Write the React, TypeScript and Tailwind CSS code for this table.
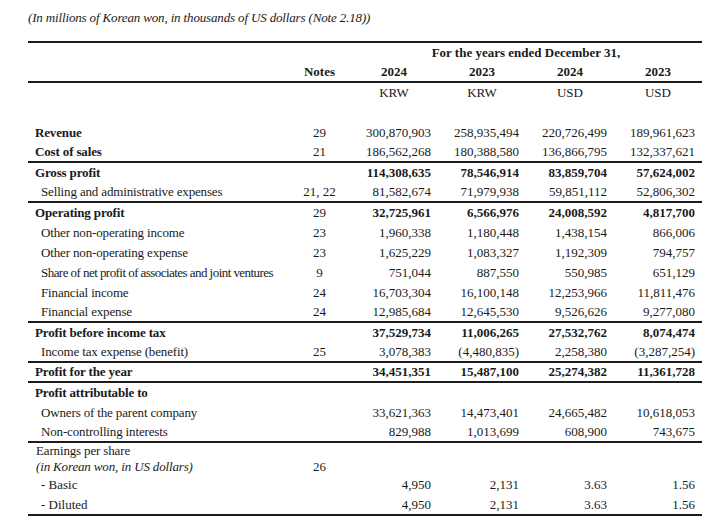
import React from "react";

type Row = {
  label: string;
  note?: string;
  vals?: string[];
  boldLabel?: boolean;
  boldVals?: boolean;
  indent?: boolean;
  border?: boolean;
  tight?: boolean;
};

const rows: Row[] = [
  { label: "Revenue", note: "29", vals: ["300,870,903", "258,935,494", "220,726,499", "189,961,623"], boldLabel: true },
  { label: "Cost of sales", note: "21", vals: ["186,562,268", "180,388,580", "136,866,795", "132,337,621"], boldLabel: true, border: true },
  { label: "Gross profit", vals: ["114,308,635", "78,546,914", "83,859,704", "57,624,002"], boldLabel: true, boldVals: true },
  { label: "Selling and administrative expenses", note: "21, 22", vals: ["81,582,674", "71,979,938", "59,851,112", "52,806,302"], indent: true, border: true },
  { label: "Operating profit", note: "29", vals: ["32,725,961", "6,566,976", "24,008,592", "4,817,700"], boldLabel: true, boldVals: true },
  { label: "Other non-operating income", note: "23", vals: ["1,960,338", "1,180,448", "1,438,154", "866,006"], indent: true },
  { label: "Other non-operating expense", note: "23", vals: ["1,625,229", "1,083,327", "1,192,309", "794,757"], indent: true },
  { label: "Share of net profit of associates and joint ventures", note: "9", vals: ["751,044", "887,550", "550,985", "651,129"], indent: true, tight: true },
  { label: "Financial income", note: "24", vals: ["16,703,304", "16,100,148", "12,253,966", "11,811,476"], indent: true },
  { label: "Financial expense", note: "24", vals: ["12,985,684", "12,645,530", "9,526,626", "9,277,080"], indent: true, border: true },
  { label: "Profit before income tax", vals: ["37,529,734", "11,006,265", "27,532,762", "8,074,474"], boldLabel: true, boldVals: true },
  { label: "Income tax expense (benefit)", note: "25", vals: ["3,078,383", "(4,480,835)", "2,258,380", "(3,287,254)"], indent: true, border: true },
  { label: "Profit for the year", vals: ["34,451,351", "15,487,100", "25,274,382", "11,361,728"], boldLabel: true, boldVals: true, border: true },
  { label: "Profit attributable to", boldLabel: true },
  { label: "Owners of the parent company", vals: ["33,621,363", "14,473,401", "24,665,482", "10,618,053"], indent: true },
  { label: "Non-controlling interests", vals: ["829,988", "1,013,699", "608,900", "743,675"], indent: true, border: true },
];

function Cols({ vals, bold }: { vals: string[]; bold?: boolean }) {
  return (
    <>
      {vals.map((v, i) => (
        <div key={i} className={`w-[88px] text-right pr-[7px] ${bold ? "font-bold" : ""}`}>
          {v}
        </div>
      ))}
    </>
  );
}

export default function App() {
  return (
    <div
      className="w-[720px] h-[529px] bg-white text-[#1a1a1a] text-[13px] overflow-hidden"
      style={{ fontFamily: '"Liberation Serif", "Times New Roman", serif' }}
    >
      <div className="pl-[28px] pt-[10px]">
        <div className="italic leading-[16px] h-[31px] tracking-[-0.15px]">
          (In millions of Korean won, in thousands of US dollars (Note 2.18))
        </div>
        <div className="w-[674px]">
          {/* Header */}
          <div className="border-t-2 border-[#1c1c1c]">
            <div className="flex h-[20px] items-center">
              <div className="w-[322px]" />
              <div className="w-[352px] text-center font-bold">For the years ended December 31,</div>
            </div>
            <div className="flex h-[20px] items-center border-b-2 border-[#1c1c1c] font-bold">
              <div className="w-[261px]" />
              <div className="w-[61px] text-center">Notes</div>
              <div className="w-[88px] text-center">2024</div>
              <div className="w-[88px] text-center">2023</div>
              <div className="w-[88px] text-center">2024</div>
              <div className="w-[88px] text-center">2023</div>
            </div>
            <div className="flex h-[20px] items-center">
              <div className="w-[261px]" />
              <div className="w-[61px]" />
              <div className="w-[88px] text-center">KRW</div>
              <div className="w-[88px] text-center">KRW</div>
              <div className="w-[88px] text-center">USD</div>
              <div className="w-[88px] text-center">USD</div>
            </div>
            <div className="h-[20px]" />
          </div>

          {/* Body */}
          {rows.map((r, idx) => (
            <div
              key={idx}
              className={`flex h-[20px] items-center ${r.border ? "border-b-2 border-[#1c1c1c]" : ""}`}
            >
              <div
                className={`w-[261px] whitespace-nowrap ${r.indent ? "pl-[13px]" : "pl-[7px]"} ${r.boldLabel ? "font-bold" : ""} ${r.tight ? "tracking-[-0.55px]" : "tracking-[-0.15px]"}`}
              >
                {r.label}
              </div>
              <div className="w-[61px] text-center">{r.note ?? ""}</div>
              {r.vals ? <Cols vals={r.vals} bold={r.boldVals} /> : null}
            </div>
          ))}

          {/* EPS */}
          <div className="flex items-end h-[32px] leading-[16px]">
            <div className="w-[261px] pl-[8px] tracking-[-0.15px]">
              <div>Earnings per share</div>
              <div className="italic">(in Korean won, in US dollars)</div>
            </div>
            <div className="w-[61px] text-center">26</div>
          </div>
          <div className="flex h-[20px] items-center">
            <div className="w-[261px] pl-[13px]">- Basic</div>
            <div className="w-[61px]" />
            <Cols vals={["4,950", "2,131", "3.63", "1.56"]} />
          </div>
          <div className="flex h-[21px] items-center border-b-2 border-[#1c1c1c]">
            <div className="w-[261px] pl-[13px]">- Diluted</div>
            <div className="w-[61px]" />
            <Cols vals={["4,950", "2,131", "3.63", "1.56"]} />
          </div>
        </div>
      </div>
    </div>
  );
}
